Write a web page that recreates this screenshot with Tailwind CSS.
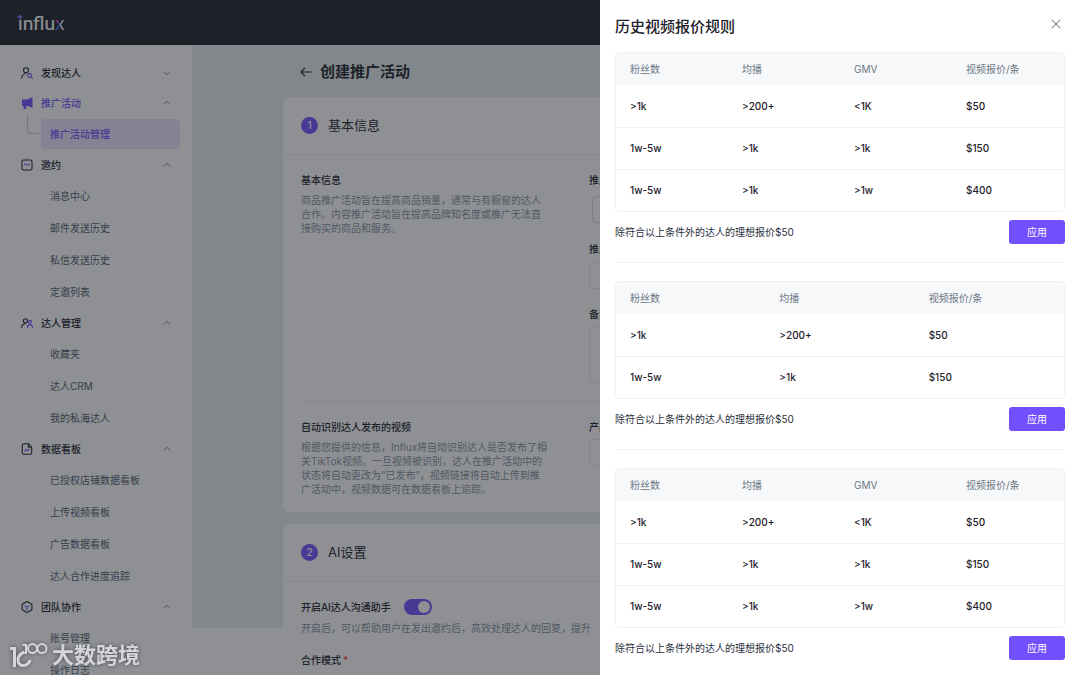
<!DOCTYPE html>
<html lang="zh-CN">
<head>
  <meta charset="UTF-8" />
  <meta name="viewport" content="width=device-width, initial-scale=1" />
  <title>Influx - 创建推广活动</title>
  <script src="https://cdn.jsdelivr.net/npm/@tailwindcss/browser@4"></script>
</head>
<body class="h-screen overflow-hidden bg-white font-['Inter','Noto_Sans_CJK_SC',sans-serif] text-[10px] text-[#1d2129]">

  <header class="relative flex h-[45px] items-center bg-[#1d222a] px-[18px]">
    <a href="#" class="relative font-['Lato',sans-serif] text-[19px] leading-6 font-medium text-white">influ<span class="bg-[conic-gradient(#e5e6eb_0_50%,#2f6bff_50%_75%,#f04fb0_75%_100%)] bg-clip-text text-transparent">x</span>
      <svg class="absolute -left-px top-[3px] h-[6px] w-[6px] bg-[#1d222a]" viewBox="0 0 8 8"><path d="M4 0 5.4 2.6 8 4 5.4 5.4 4 8 2.6 5.4 0 4 2.6 2.6Z" fill="#8a6cff" /></svg>
    </a>
  </header>

  <div class="flex">
    <!-- Sidebar -->
    <nav class="w-48 shrink-0 bg-white pt-[13px] pr-3 pl-[21px] text-[#4e5969]">
      <a href="#" class="flex h-[30px] items-center gap-2 font-medium text-[#1d2129]">
        <svg class="h-3 w-3" viewBox="0 0 12 12" fill="none" stroke="#1d2129" stroke-width="1.1" stroke-linecap="round"><circle cx="5" cy="3.3" r="2.5" /><path d="M.7 11.2c0-2.6 1.600-4.200 4-4.400" /><circle cx="8.5" cy="8.5" r="1.9" stroke="#7350ff" /><path d="m10 10 1.400 1.300" stroke="#7350ff" /></svg>
        <span class="flex-1">发现达人</span>
        <svg class="mr-[9px] h-2 w-2" viewBox="0 0 8 8" fill="none" stroke="#86909c"><path d="m.7 2.400 3.300 3.200 3.300-3.200" /></svg>
      </a>

      <a href="#" class="flex h-[30px] items-center gap-2 font-medium text-[#7350ff]">
        <svg class="h-3 w-3" viewBox="0 0 12 12" fill="#7350ff"><path d="M11.500 0v11L6.800 8.900H5.200V12H2.600V8.900H1V2.600h5.300Z" /></svg>
        <span class="flex-1">推广活动</span>
        <svg class="mr-[9px] h-2 w-2" viewBox="0 0 8 8" fill="none" stroke="#86909c"><path d="m.7 5.6 3.3-3.2 3.3 3.2" /></svg>
      </a>
      <div class="flex h-8 items-center">
        <span class="-mt-5 ml-1.5 h-5 w-3 rounded-bl-sm border-b border-l border-[#c9cdd4]"></span>
        <a href="#" class="ml-0.5 flex h-[30px] flex-1 items-center rounded bg-[#e9e5ff] pl-[9px] font-medium text-[#7350ff]">推广活动管理</a>
      </div>

      <a href="#" class="flex h-[30px] items-center gap-2 font-medium text-[#1d2129]">
        <svg class="h-3 w-3" viewBox="0 0 12 12" fill="none" stroke="#1d2129" stroke-width="1.1"><rect x="1" y="1" width="10" height="10" rx="1.6" /><path d="M3.300 4.500c.8 1.900 4.600 1.900 5.400 0" stroke="#7350ff" /></svg>
        <span class="flex-1">邀约</span>
        <svg class="mr-[9px] h-2 w-2" viewBox="0 0 8 8" fill="none" stroke="#86909c"><path d="m.7 5.6 3.3-3.2 3.3 3.2" /></svg>
      </a>
      <a href="#" class="flex h-8 items-center pl-[29px]">消息中心</a>
      <a href="#" class="flex h-8 items-center pl-[29px]">邮件发送历史</a>
      <a href="#" class="flex h-8 items-center pl-[29px]">私信发送历史</a>
      <a href="#" class="flex h-8 items-center pl-[29px]">定邀列表</a>

      <a href="#" class="flex h-[30px] items-center gap-2 font-medium text-[#1d2129]">
        <svg class="h-3 w-3" viewBox="0 0 12 12" fill="none" stroke="#1d2129" stroke-width="1.1" stroke-linecap="round"><circle cx="4.4" cy="3.8" r="2.1" /><path d="M.7 10.6c0-2.5 1.6-3.7 3.7-3.8" /><circle cx="9" cy="4.8" r="1.4" stroke="#7350ff" /><path d="M6.3 10.6c.2-2.2 1.2-3.2 2.7-3.2s2.4 1 2.6 3.2" stroke="#7350ff" /></svg>
        <span class="flex-1">达人管理</span>
        <svg class="mr-[9px] h-2 w-2" viewBox="0 0 8 8" fill="none" stroke="#86909c"><path d="m.7 5.6 3.3-3.2 3.3 3.2" /></svg>
      </a>
      <a href="#" class="flex h-8 items-center pl-[29px]">收藏夹</a>
      <a href="#" class="flex h-8 items-center pl-[29px]">达人CRM</a>
      <a href="#" class="flex h-8 items-center pl-[29px]">我的私海达人</a>

      <a href="#" class="flex h-[30px] items-center gap-2 font-medium text-[#1d2129]">
        <svg class="h-3 w-3" viewBox="0 0 12 12" fill="none" stroke="#1d2129" stroke-width="1.1"><path d="M7.3.7H2.900C1.900.7 1.300 1.300 1.300 2.300v7.400c0 1 .6 1.600 1.600 1.600h6.200c1 0 1.600-.6 1.600-1.600V4.200L7.300.7v3.500h3.400" /><path d="m3.400 8.300 1.600-1.600 1.300 1 2-1.900" stroke="#7350ff" /></svg>
        <span class="flex-1">数据看板</span>
        <svg class="mr-[9px] h-2 w-2" viewBox="0 0 8 8" fill="none" stroke="#86909c"><path d="m.7 5.6 3.3-3.2 3.3 3.2" /></svg>
      </a>
      <a href="#" class="flex h-8 items-center pl-[29px]">已授权店铺数据看板</a>
      <a href="#" class="flex h-8 items-center pl-[29px]">上传视频看板</a>
      <a href="#" class="flex h-8 items-center pl-[29px]">广告数据看板</a>
      <a href="#" class="flex h-8 items-center pl-[29px]">达人合作进度追踪</a>

      <a href="#" class="flex h-[30px] items-center gap-2 font-medium text-[#1d2129]">
        <svg class="h-3 w-3" viewBox="0 0 12 12" fill="none" stroke="#1d2129" stroke-width="1.1" stroke-linejoin="round"><path d="m6 .6 4.900 2.700v5.400L6 11.400 1.100 8.700V3.300Z" /><path d="M3.500 4.600 6 6.100l2.500-1.500M6 6.100v3" stroke="#7350ff" /></svg>
        <span class="flex-1">团队协作</span>
        <svg class="mr-[9px] h-2 w-2" viewBox="0 0 8 8" fill="none" stroke="#86909c"><path d="m.7 5.6 3.3-3.2 3.3 3.2" /></svg>
      </a>
      <a href="#" class="flex h-8 items-center pl-[29px]">账号管理</a>
      <a href="#" class="flex h-8 items-center pl-[29px]">操作日志</a>
    </nav>

    <!-- Campaign form -->
    <main class="h-[calc(100vh-92px)] flex-1 bg-[#e7eded] px-[91px]">
      <div class="flex h-[52px] items-center gap-2 pt-0.5 pl-[17px]">
        <button type="button" aria-label="返回">
          <svg class="h-3 w-3" viewBox="0 0 12 12" fill="none" stroke="#1d2129" stroke-width="1.2"><path d="M11.8 6H.9M5 1.9.9 6 5 10.1" /></svg>
        </button>
        <h1 class="text-[15px] font-semibold">创建推广活动</h1>
      </div>

      <section class="rounded-md bg-white">
        <div class="flex h-[58px] items-center gap-[10px] border-b border-[#eeeff2] px-[18px]">
          <span class="flex h-[17px] w-[17px] items-center justify-center rounded-full bg-[#7350ff] font-medium text-white">1</span>
          <h2 class="text-[13px]">基本信息</h2>
        </div>
        <div class="px-[18px] pt-[17px] pb-4">
          <div class="flex gap-[46px]">
            <div class="w-[242px] shrink-0">
              <h3 class="mb-[5px] leading-4 font-medium">基本信息</h3>
              <p class="leading-[14px] text-[#86909c]">商品推广活动旨在提高商品销量，通常与有橱窗的达人合作。内容推广活动旨在提高品牌知名度或推广无法直接购买的商品和服务。</p>
            </div>
            <div class="flex-1">
              <label for="type" class="block leading-4 font-medium">推广类型</label>
              <div class="mt-2 mb-[18px] pl-[3px]">
                <input id="type" type="text" class="block h-[27px] w-full rounded border border-[#dcdfe5] px-3" />
              </div>
              <label for="name" class="block leading-4 font-medium">推广名称</label>
              <input id="name" type="text" class="mt-[5px] mb-[17px] block h-[27px] w-full rounded border border-[#e9ebee] px-3" />
              <label for="note" class="block leading-4 font-medium">备注</label>
              <textarea id="note" class="mt-1 mb-[18px] block h-[57px] w-full resize-none rounded border border-[#e9ebee] px-3"></textarea>
            </div>
          </div>
          <div class="flex gap-[46px] border-t border-[#eeeff2] pt-[17px]">
            <div class="w-[242px] shrink-0">
              <h3 class="mb-[5px] leading-4 font-medium">自动识别达人发布的视频</h3>
              <p class="leading-[14px] whitespace-nowrap text-[#86909c]">根据您提供的信息，Influx将自动识别达人是否发布了相<br />关TikTok视频。一旦视频被识别，达人在推广活动中的<br />状态将自动更改为“已发布”，视频链接将自动上传到推<br />广活动中，视频数据可在数据看板上追踪。</p>
            </div>
            <div class="flex-1">
              <label for="product" class="block leading-4 font-medium">产品</label>
              <input id="product" type="text" class="mt-1 block h-[27px] w-full rounded border border-[#e9ebee] px-3" />
            </div>
          </div>
        </div>
      </section>

      <section class="mt-3 rounded-md bg-white">
        <div class="flex h-[58px] items-center gap-[10px] border-b border-[#eeeff2] px-[18px]">
          <span class="flex h-[17px] w-[17px] items-center justify-center rounded-full bg-[#7350ff] font-medium text-white">2</span>
          <h2 class="text-[13px]">AI设置</h2>
        </div>
        <div class="px-[18px] pt-[17px] pb-10">
          <label class="flex h-4 items-center gap-[13px] font-medium">
            开启AI达人沟通助手
            <input type="checkbox" role="switch" checked class="sr-only" />
            <span class="flex h-4 w-7 items-center justify-end rounded-full bg-[#7350ff] px-0.5"><span class="h-3 w-3 rounded-full bg-white"></span></span>
          </label>
          <p class="mt-[5px] leading-4 whitespace-nowrap text-[#86909c]">开启后，可以帮助用户在发出邀约后，高效处理达人的回复，提升</p>
          <h3 class="mt-4 leading-4 font-medium">合作模式<span class="ml-0.5 text-[#f53f3f]">*</span></h3>
        </div>
      </section>
    </main>
  </div>

  <div class="fixed inset-0 bg-[#1d2129]/50"></div>

  <!-- Quote rules drawer -->
  <aside role="dialog" aria-labelledby="drawerTitle" class="fixed inset-y-0 right-0 w-[480px] overflow-hidden bg-white px-[15px]">
    <div class="flex h-[52px] items-center justify-between">
      <h2 id="drawerTitle" class="pt-0.5 text-[15px] font-medium">历史视频报价规则</h2>
      <button type="button" aria-label="关闭" class="mr-1 mb-1">
        <svg class="h-[10px] w-[10px]" viewBox="0 0 10 10" fill="none" stroke="#86909c" stroke-width="1.1"><path d="m.6.6 8.8 8.8M9.4.6.6 9.4" /></svg>
      </button>
    </div>

    <div class="border-b border-[#f2f3f5] pb-[18px]">
      <div class="overflow-hidden rounded border border-[#f0f1f4]">
        <table class="w-full table-fixed border-separate border-spacing-0 text-left">
          <thead class="bg-[#f7f8fa] text-[#6b7785]">
            <tr>
              <th class="h-8 px-[14px] font-normal">粉丝数</th>
              <th class="h-8 px-[14px] font-normal">均播</th>
              <th class="h-8 px-[14px] font-normal">GMV</th>
              <th class="h-8 px-[14px] font-normal">视频报价/条</th>
            </tr>
          </thead>
          <tbody class="font-medium">
            <tr>
              <td class="h-[42px] px-[14px]">&gt;1k</td>
              <td class="h-[42px] px-[14px]">&gt;200+</td>
              <td class="h-[42px] px-[14px]">&lt;1K</td>
              <td class="h-[42px] px-[14px]">$50</td>
            </tr>
            <tr>
              <td class="h-[42px] border-t border-[#f0f1f4] px-[14px]">1w-5w</td>
              <td class="h-[42px] border-t border-[#f0f1f4] px-[14px]">&gt;1k</td>
              <td class="h-[42px] border-t border-[#f0f1f4] px-[14px]">&gt;1k</td>
              <td class="h-[42px] border-t border-[#f0f1f4] px-[14px]">$150</td>
            </tr>
            <tr>
              <td class="h-[42px] border-t border-[#f0f1f4] px-[14px]">1w-5w</td>
              <td class="h-[42px] border-t border-[#f0f1f4] px-[14px]">&gt;1k</td>
              <td class="h-[42px] border-t border-[#f0f1f4] px-[14px]">&gt;1w</td>
              <td class="h-[42px] border-t border-[#f0f1f4] px-[14px]">$400</td>
            </tr>
          </tbody>
        </table>
      </div>
      <div class="mt-2 flex items-center justify-between">
        <p class="text-[#272e3b]">除符合以上条件外的达人的理想报价$50</p>
        <button type="button" class="h-6 w-14 rounded-[3px] bg-[#7350ff] text-white">应用</button>
      </div>
    </div>

    <div class="border-b border-[#f2f3f5] py-[18px]">
      <div class="overflow-hidden rounded border border-[#f0f1f4]">
        <table class="w-full table-fixed border-separate border-spacing-0 text-left">
          <thead class="bg-[#f7f8fa] text-[#6b7785]">
            <tr>
              <th class="h-8 px-[14px] font-normal">粉丝数</th>
              <th class="h-8 px-[14px] font-normal">均播</th>
              <th class="h-8 px-[14px] font-normal">视频报价/条</th>
            </tr>
          </thead>
          <tbody class="font-medium">
            <tr>
              <td class="h-[42px] px-[14px]">&gt;1k</td>
              <td class="h-[42px] px-[14px]">&gt;200+</td>
              <td class="h-[42px] px-[14px]">$50</td>
            </tr>
            <tr>
              <td class="h-[42px] border-t border-[#f0f1f4] px-[14px]">1w-5w</td>
              <td class="h-[42px] border-t border-[#f0f1f4] px-[14px]">&gt;1k</td>
              <td class="h-[42px] border-t border-[#f0f1f4] px-[14px]">$150</td>
            </tr>
          </tbody>
        </table>
      </div>
      <div class="mt-2 flex items-center justify-between">
        <p class="text-[#272e3b]">除符合以上条件外的达人的理想报价$50</p>
        <button type="button" class="h-6 w-14 rounded-[3px] bg-[#7350ff] text-white">应用</button>
      </div>
    </div>

    <div class="pt-[18px]">
      <div class="overflow-hidden rounded border border-[#f0f1f4]">
        <table class="w-full table-fixed border-separate border-spacing-0 text-left">
          <thead class="bg-[#f7f8fa] text-[#6b7785]">
            <tr>
              <th class="h-8 px-[14px] font-normal">粉丝数</th>
              <th class="h-8 px-[14px] font-normal">均播</th>
              <th class="h-8 px-[14px] font-normal">GMV</th>
              <th class="h-8 px-[14px] font-normal">视频报价/条</th>
            </tr>
          </thead>
          <tbody class="font-medium">
            <tr>
              <td class="h-[42px] px-[14px]">&gt;1k</td>
              <td class="h-[42px] px-[14px]">&gt;200+</td>
              <td class="h-[42px] px-[14px]">&lt;1K</td>
              <td class="h-[42px] px-[14px]">$50</td>
            </tr>
            <tr>
              <td class="h-[42px] border-t border-[#f0f1f4] px-[14px]">1w-5w</td>
              <td class="h-[42px] border-t border-[#f0f1f4] px-[14px]">&gt;1k</td>
              <td class="h-[42px] border-t border-[#f0f1f4] px-[14px]">&gt;1k</td>
              <td class="h-[42px] border-t border-[#f0f1f4] px-[14px]">$150</td>
            </tr>
            <tr>
              <td class="h-[42px] border-t border-[#f0f1f4] px-[14px]">1w-5w</td>
              <td class="h-[42px] border-t border-[#f0f1f4] px-[14px]">&gt;1k</td>
              <td class="h-[42px] border-t border-[#f0f1f4] px-[14px]">&gt;1w</td>
              <td class="h-[42px] border-t border-[#f0f1f4] px-[14px]">$400</td>
            </tr>
          </tbody>
        </table>
      </div>
      <div class="mt-2 flex items-center justify-between">
        <p class="text-[#272e3b]">除符合以上条件外的达人的理想报价$50</p>
        <button type="button" class="h-6 w-14 rounded-[3px] bg-[#7350ff] text-white">应用</button>
      </div>
    </div>
  </aside>

  <!-- Watermark -->
  <div class="fixed bottom-1.5 left-2 flex items-center gap-1 text-[#d4d5d7] drop-shadow-[0_0_2px_#4a4d52]">
    <svg class="h-7 w-10" viewBox="0 0 40 28" fill="none" stroke="currentColor" stroke-width="3"><path d="M2 7.500h4.500V26M16.500 11c-4 1.500-6.500 4.300-6.500 7.800 0 3.400 2 5.700 5.200 5.700 3.300 0 5.800-2 7-5.500" /><path d="M14.500 4h3.500v9" stroke-width="2" /><circle cx="24.500" cy="7.500" r="4.500" stroke-width="2" /><circle cx="34" cy="7.500" r="4.500" stroke-width="2" /></svg>
    <span class="text-[22px] leading-7 font-bold">大数跨境</span>
  </div>
</body>
</html>
